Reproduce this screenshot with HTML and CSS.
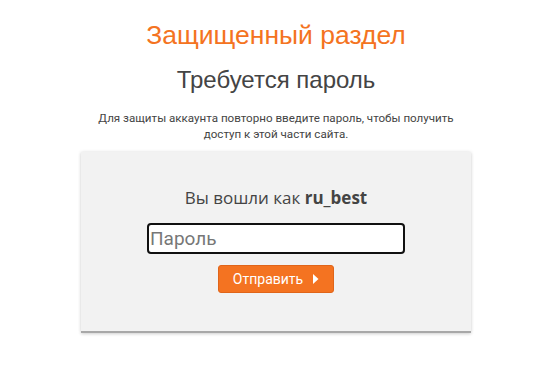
FILE: index.html
```html
<!DOCTYPE html>
<html lang="ru">
<head>
<meta charset="utf-8">
<link rel="stylesheet" href="styles.css">
</head>
<body>
<div class="page">
  <h1 class="title">Защищенный раздел</h1>
  <h2 class="subtitle">Требуется пароль</h2>
  <p class="note">Для защиты аккаунта повторно введите пароль, чтобы получить<br>доступ к этой части сайта.</p>
  <div class="card">
    <div class="who">Вы вошли как <b>ru_best</b></div>
    <input class="pass" type="password" placeholder="Пароль">
    <button class="send">Отправить <svg class="arrow" width="7" height="10" viewBox="0 0 7 10"><path d="M1 0 L6.5 5 L1 10 Z" fill="#fff"/></svg></button>
  </div>
</div>
</body>
</html>
```
FILE: styles.css
```css
html, body { margin: 0; padding: 0; background: #fff; min-height: 368px; }
.page {
  width: 390px;
  margin-left: 81px;
  display: flex;
  flex-direction: column;
  align-items: center;
  font-family: "Liberation Sans", Arial, sans-serif;
}
.title {
  margin: 20px 0 0;
  font-weight: normal;
  font-size: 26.5px;
  line-height: 30px;
  color: #f47321;
}
.subtitle {
  margin: 16px 0 0;
  font-weight: normal;
  font-size: 24px;
  line-height: 28px;
  color: #444;
}
.note {
  margin: 16px 0 0;
  font-family: Roboto, sans-serif;
  font-size: 11.6px;
  line-height: 16px;
  color: #444;
  text-align: center;
  white-space: nowrap;
}
.card {
  margin-top: 10px;
  width: 390px;
  height: 181px;
  background: #f2f2f2;
  border-bottom: 2px solid #a8a8a8;
  box-shadow: 0 1px 3px rgba(0,0,0,0.15), 0 0 4px rgba(0,0,0,0.08);
  display: flex;
  flex-direction: column;
  align-items: center;
  box-sizing: border-box;
  padding-top: 34px;
}
.who {
  font-family: "Open Sans", sans-serif;
  font-size: 17px;
  line-height: 24px;
  color: #444;
}
.who b { font-weight: 700; }
.pass {
  margin-top: 13px;
  width: 258px;
  height: 31px;
  box-sizing: border-box;
  border: 2px solid #111;
  border-radius: 4px;
  background: #fff;
  font-family: Roboto, sans-serif;
  font-size: 19px;
  padding: 0 1px;
  outline: none;
}
.pass::placeholder { color: #777; }
.send {
  margin-top: 11px;
  width: 116px;
  height: 28px;
  border: 1px solid #e0651a;
  border-radius: 3px;
  background: #f47321;
  color: #fff;
  font-family: Roboto, sans-serif;
  font-size: 14px;
  display: flex;
  align-items: center;
  justify-content: center;
  gap: 9px;
  padding: 0;
}
```
